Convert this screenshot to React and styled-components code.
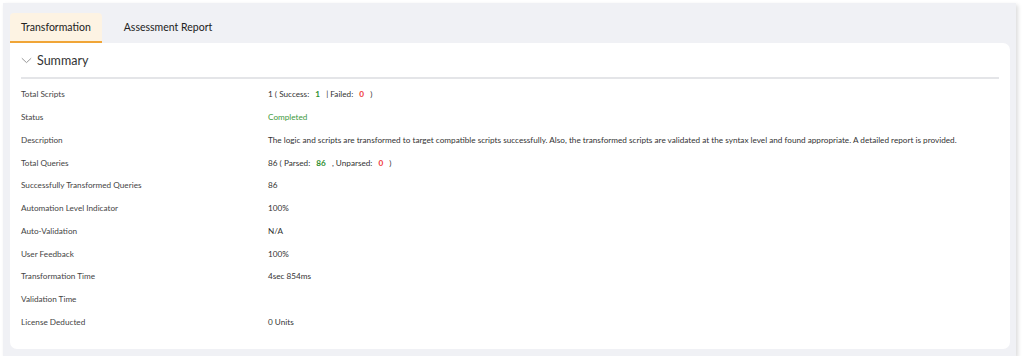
import React, { useState } from "react";
import styled, { createGlobalStyle } from "styled-components";

const GlobalStyle = createGlobalStyle`
  body {
    margin: 0;
    background: #ffffff;
    font-family: "Lato", "Open Sans", sans-serif;
    color: #333;
  }
`;

const Panel = styled.div`
  box-sizing: border-box;
  margin: 3px 0 0 3px;
  width: 1013px;
  height: 353px;
  background: #f0f1f5;
  box-shadow: 2px 2px 4px rgba(0, 0, 0, 0.14);
  padding: 10px 6px 7px 7px;
  display: flex;
  flex-direction: column;
`;

const Tabs = styled.div`
  display: flex;
  height: 30px;
  flex-shrink: 0;
`;

const Tab = styled.div`
  box-sizing: border-box;
  display: flex;
  align-items: center;
  padding: 0 11px;
  margin-right: 11px;
  font-size: 10.5px;
  color: #222;
  cursor: pointer;
  border-radius: 4px 4px 0 0;
  background: ${(p) => (p.active ? "#fdf3e3" : "transparent")};
  border-bottom: 2px solid ${(p) => (p.active ? "#f0a537" : "transparent")};
`;

const Card = styled.div`
  flex: 1;
  background: #ffffff;
  border-radius: 0 7px 7px 7px;
  padding: 0 11px;
`;

const SectionHeader = styled.div`
  display: flex;
  align-items: center;
  gap: 5px;
  height: 33px;
  padding-top: 1px;
  border-bottom: 2px solid #e4e5e8;
  font-size: 12.5px;
  color: #333;
`;

const Rows = styled.div`
  padding-top: 4px;
`;

const Row = styled.div`
  display: grid;
  grid-template-columns: 247px 1fr;
  height: 22.75px;
  align-items: center;
  font-size: 8.2px;
`;

const Label = styled.div`
  color: #444;
`;

const Value = styled.div`
  color: ${(p) => (p.tone === "ok" ? "#3d9a3d" : "#333")};
  white-space: nowrap;
`;

const Count = styled.span`
  font-weight: 700;
  margin: 0 4px;
  color: ${(p) => (p.tone === "bad" ? "#ef3b3b" : "#2f8f2f")};
`;

const Chevron = () => (
  <svg width="11" height="7" viewBox="0 0 11 7">
    <path d="M0.8 1.2 L5.5 5.6 L10.2 1.2" fill="none" stroke="#999" strokeWidth="1" />
  </svg>
);

const rows = [
  ["Total Scripts", <>1 ( Success: <Count>1</Count> | Failed: <Count tone="bad">0</Count> )</>],
  ["Status", "Completed", "ok"],
  [
    "Description",
    "The logic and scripts are transformed to target compatible scripts successfully. Also, the transformed scripts are validated at the syntax level and found appropriate. A detailed report is provided.",
  ],
  ["Total Queries", <>86 ( Parsed: <Count>86</Count> , Unparsed: <Count tone="bad">0</Count> )</>],
  ["Successfully Transformed Queries", "86"],
  ["Automation Level Indicator", "100%"],
  ["Auto-Validation", "N/A"],
  ["User Feedback", "100%"],
  ["Transformation Time", "4sec 854ms"],
  ["Validation Time", ""],
  ["License Deducted", "0 Units"],
];

function App() {
  const [tab, setTab] = useState("Transformation");
  return (
    <>
      <GlobalStyle />
      <Panel>
        <Tabs>
          {["Transformation", "Assessment Report"].map((t) => (
            <Tab key={t} active={tab === t} onClick={() => setTab(t)}>
              {t}
            </Tab>
          ))}
        </Tabs>
        <Card>
          <SectionHeader>
            <Chevron />
            Summary
          </SectionHeader>
          <Rows>
            {rows.map(([label, value, tone]) => (
              <Row key={label}>
                <Label>{label}</Label>
                <Value tone={tone}>{value}</Value>
              </Row>
            ))}
          </Rows>
        </Card>
      </Panel>
    </>
  );
}

export default App;
